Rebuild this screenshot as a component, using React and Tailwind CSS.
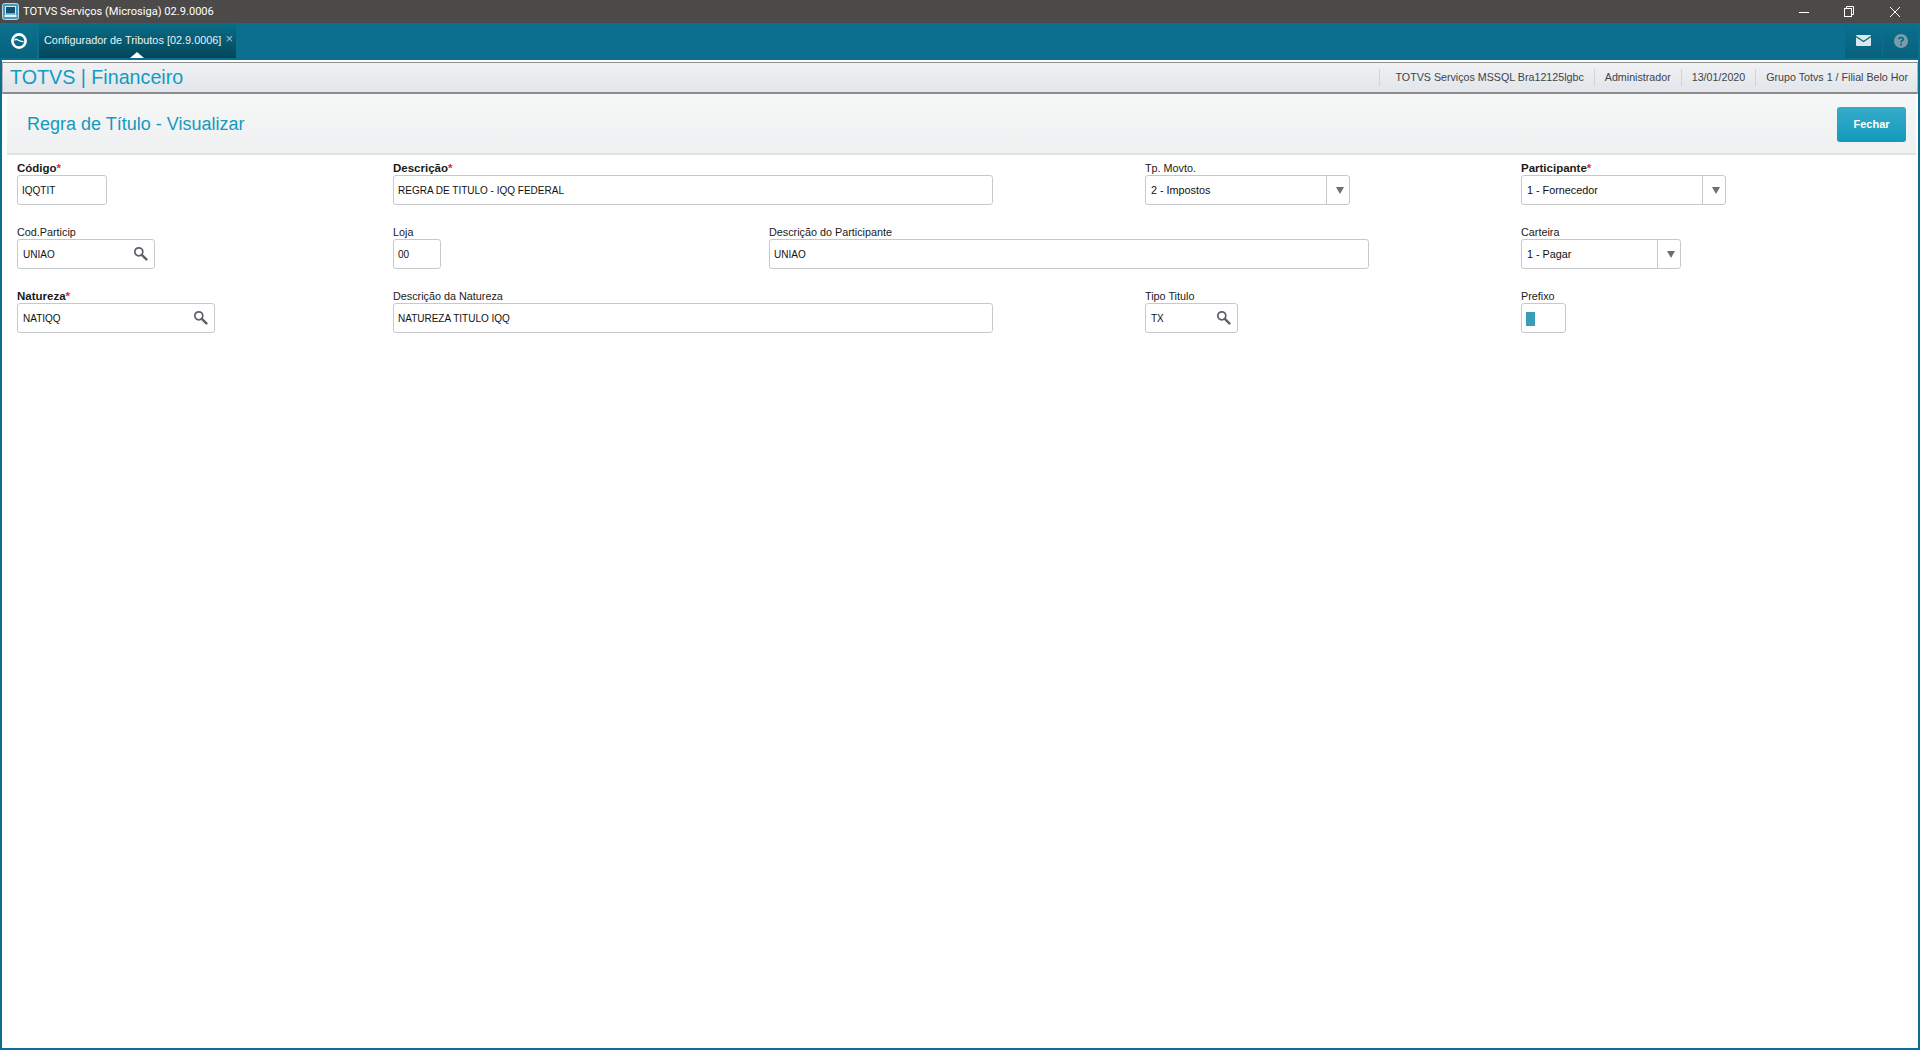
import React from "react";

const FONT = "[font-family:'Liberation_Sans',Arial,sans-serif]";

function Search({ className = "" }) {
  return (
    <svg width="15" height="15" viewBox="0 0 15 15" className={className}>
      <circle cx="5.8" cy="5.8" r="4" fill="none" stroke="#5a6068" strokeWidth="1.7" />
      <path d="M8.8 8.8L13.4 13.4" stroke="#5a6068" strokeWidth="2.4" strokeLinecap="round" />
    </svg>
  );
}

function Label({ text, req }) {
  return (
    <div className={`h-[14px] leading-[14px] text-[#1a1a1a] whitespace-nowrap ${req ? "text-[11.5px] font-bold" : "text-[10.8px]"}`}>
      {text}
      {req && <span className="text-[#e8212e]">*</span>}
    </div>
  );
}

function Box({ w, children, className = "" }) {
  return (
    <div
      style={{ width: w }}
      className={`flex h-[30px] items-center rounded-[3px] border border-[#c6c8ca] bg-white text-[#111] ${className}`}
    >
      {children}
    </div>
  );
}

function Text({ label, req, w, value, className = "" }) {
  return (
    <div className={className}>
      <Label text={label} req={req} />
      <Box w={w}>
        <span className="pl-[4px] pt-px text-[10px] whitespace-nowrap">{value}</span>
      </Box>
    </div>
  );
}

function Lookup({ label, req, w, value, className = "" }) {
  return (
    <div className={className}>
      <Label text={label} req={req} />
      <Box w={w} className="justify-between">
        <span className="pl-[5px] pt-px text-[10px] whitespace-nowrap">{value}</span>
        <Search className="mb-[2px] mr-[6px]" />
      </Box>
    </div>
  );
}

function Select({ label, req, w, value, className = "" }) {
  return (
    <div className={className}>
      <Label text={label} req={req} />
      <Box w={w} className="justify-between">
        <span className="pl-[5px] pt-px text-[10.8px] whitespace-nowrap">{value}</span>
        <div className="flex h-[28px] w-[23px] items-center justify-center border-l border-[#c6c8ca] pl-[3px]">
          <div className="h-0 w-0 border-x-[4.5px] border-t-[7px] border-x-transparent border-t-[#6b7078]" />
        </div>
      </Box>
    </div>
  );
}

export default function App() {
  return (
    <div className={`${FONT} flex h-[1050px] w-[1920px] flex-col overflow-hidden bg-[#0b708f]`}>
      {/* title bar */}
      <div className="flex h-[23px] shrink-0 items-center bg-[#4c4a48] text-white">
        <svg width="18" height="18" viewBox="0 0 18 18" className="ml-[2px]">
          <rect x="0.5" y="0.5" width="16" height="16" rx="2" fill="#3d9dc0" stroke="#bcd8e4" />
          <rect x="3.5" y="3.5" width="10" height="7.5" fill="#17506f" stroke="#d8e8ee" />
          <rect x="2.5" y="12" width="12" height="2" fill="#e6eef2" />
        </svg>
        <span className="ml-[3px] font-['Roboto',sans-serif] text-[11.1px] leading-[23px]">
          TOTVS Serviços (Microsiga) 02.9.0006
        </span>
        <div className="ml-auto flex items-center">
          <svg width="12" height="12" viewBox="0 0 12 12" className="mr-[33px]">
            <path d="M1 6.5H11" stroke="#fff" strokeWidth="1" />
          </svg>
          <svg width="12" height="12" viewBox="0 0 12 12" className="mr-[34px]">
            <path d="M3.5 2.5V0.5H10.5V8.5H8.5" fill="none" stroke="#fff" />
            <rect x="1.5" y="2.5" width="7" height="8" fill="none" stroke="#fff" />
          </svg>
          <svg width="12" height="12" viewBox="0 0 12 12" className="mr-[19px]">
            <path d="M1 1L11 11M11 1L1 11" stroke="#fff" strokeWidth="1" />
          </svg>
        </div>
      </div>

      {/* app bar */}
      <div className="flex h-[37px] shrink-0 bg-[#0b708f]">
        <div className="flex h-[35px] w-[37px] items-center justify-center bg-gradient-to-b from-[#0b7290] to-[#08627c]">
          <svg width="18" height="18" viewBox="0 0 18 18">
            <circle cx="9" cy="9" r="6.6" fill="none" stroke="#fff" strokeWidth="2.6" />
            <path d="M4.5 8.5C6.5 5 8 10 13.5 9.5" fill="none" stroke="#fff" strokeWidth="1.3" />
          </svg>
        </div>
        <div className="relative ml-[2px] flex h-[35px] w-[197px] items-start bg-gradient-to-b from-[#0a6e89] to-[#04475a] pl-[5px] pt-[10px] text-[10.9px] leading-[14px] text-[#e8f2f5]">
          <span className="whitespace-nowrap">Configurador de Tributos [02.9.0006]</span>
          <span className="ml-[4px] text-[13px] leading-[11px] text-[#a9c4cc]">×</span>
          <div className="absolute bottom-0 left-[91px] h-0 w-0 border-x-[7px] border-b-[6px] border-x-transparent border-b-white" />
        </div>
        <div className="ml-auto flex h-[35px]">
          <div className="mr-px flex w-[37px] items-center justify-center bg-gradient-to-b from-[#0b708f] to-[#08617b]">
            <svg width="15" height="11" viewBox="0 0 15 11">
              <rect width="15" height="11" rx="1" fill="#dbe7ec" />
              <path d="M0 1.5L7.5 6.5L15 1.5" fill="none" stroke="#0a6784" strokeWidth="1.3" />
            </svg>
          </div>
          <div className="mr-[2px] flex w-[35px] items-center justify-center bg-gradient-to-b from-[#0b708f] to-[#08617b]">
            <svg width="14" height="14" viewBox="0 0 14 14">
              <circle cx="7" cy="7" r="7" fill="#7b9cab" />
              <path d="M4.8 5.2C4.8 2.9 9.3 2.9 9.3 5.2C9.3 6.8 7 6.6 7 8.4" fill="none" stroke="#0a6784" strokeWidth="1.6" />
              <rect x="6.1" y="9.6" width="1.8" height="1.8" fill="#0a6784" />
            </svg>
          </div>
        </div>
      </div>

      {/* content frame */}
      <div className="mx-[2px] mb-[2px] flex min-h-0 flex-1 flex-col bg-white">
        {/* module strip */}
        <div className="mt-[2px] flex h-[32px] shrink-0 items-center border border-b-2 border-[#8b8b8f] border-x-[#b4b6b8] bg-gradient-to-b from-[#f0f2f4] to-[#e2e5e9] pl-[7px] pr-[9px]">
          <span className="mb-[2px] text-[19.7px] leading-[24px] text-[#109cc4]">TOTVS | Financeiro</span>
          <div className="ml-auto flex h-[18px] items-center text-[10.7px] text-[#3f4347]">
            <span className="whitespace-nowrap border-l border-[#d2d5d8] pl-[15px] pr-[10px]">TOTVS Serviços MSSQL Bra12125lgbc</span>
            <span className="whitespace-nowrap border-l border-[#d2d5d8] px-[10px]">Administrador</span>
            <span className="whitespace-nowrap border-l border-[#d2d5d8] px-[10px]">13/01/2020</span>
            <span className="whitespace-nowrap border-l border-[#d2d5d8] pl-[10px]">Grupo Totvs 1 / Filial Belo Hor</span>
          </div>
        </div>

        {/* page header */}
        <div className="ml-[5px] mr-[2px] flex h-[61px] shrink-0 items-center justify-between border-b-2 border-[#e0e2e4] bg-gradient-to-b from-[#f6f7f7] to-[#eef0f1] pl-[20px] pr-[10px]">
          <span className="text-[18px] leading-[22px] text-[#1499c0]">Regra de Título - Visualizar</span>
          <button className="mt-[2px] h-[35px] w-[69px] rounded-[3px] bg-gradient-to-b from-[#35abc9] to-[#0f9abd] text-[11px] font-bold text-white">
            Fechar
          </button>
        </div>

        {/* form */}
        <div className="grid grid-cols-[376px_376px_376px_376px_1fr] auto-rows-[44px] gap-y-[20px] pl-[15px] pt-[6px]">
          <Text label="Código" req w={90} value="IQQTIT" />
          <Text label="Descrição" req w={600} value="REGRA DE TITULO - IQQ FEDERAL" className="col-span-2" />
          <Select label="Tp. Movto." w={205} value="2 - Impostos" />
          <Select label="Participante" req w={205} value="1 - Fornecedor" />

          <Lookup label="Cod.Particip" w={138} value="UNIAO" />
          <Text label="Loja" w={48} value="00" />
          <Text label="Descrição do Participante" w={600} value="UNIAO" className="col-span-2" />
          <Select label="Carteira" w={160} value="1 - Pagar" />

          <Lookup label="Natureza" req w={198} value="NATIQQ" />
          <Text label="Descrição da Natureza" w={600} value="NATUREZA TITULO IQQ" className="col-span-2" />
          <Lookup label="Tipo Titulo" w={93} value="TX" />
          <div>
            <Label text="Prefixo" />
            <Box w={45}>
              <div className="ml-[4px] mt-[1px] h-[14px] w-[9px] bg-[#3a9db8]" />
            </Box>
          </div>
        </div>
      </div>
    </div>
  );
}
